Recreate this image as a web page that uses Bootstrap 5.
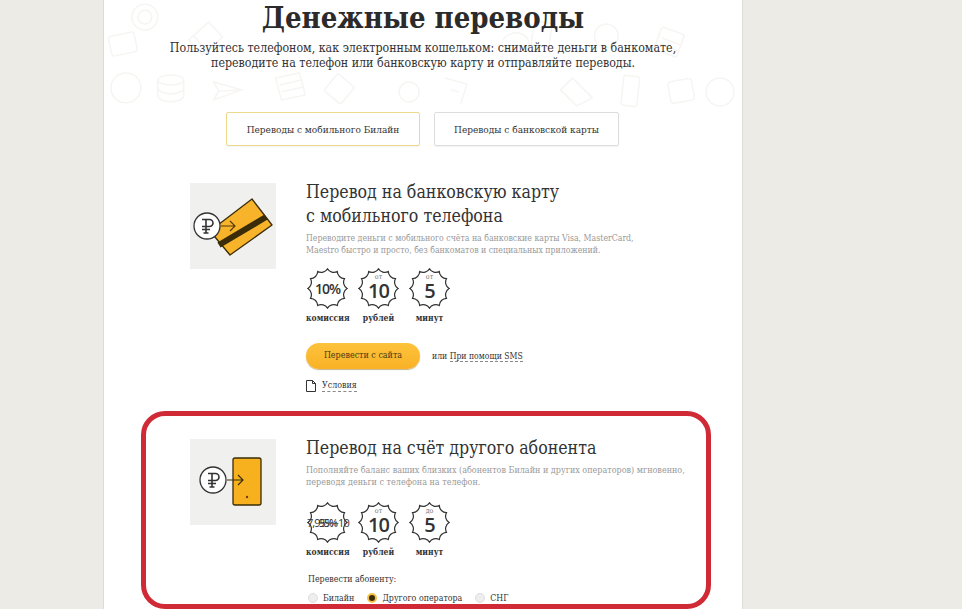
<!DOCTYPE html>
<html lang="ru">

<head>
  <meta charset="UTF-8" />
  <meta name="viewport" content="width=device-width, initial-scale=1.0" />
  <title>Денежные переводы</title>
  <link href="https://cdn.jsdelivr.net/npm/bootstrap@5.3.3/dist/css/bootstrap.min.css" rel="stylesheet" />
  <style>
    html, body {
      height: 100%;
      overflow: hidden;
    }

    body {
      background-color: #ecebe6;
      font-family: "DejaVu Serif Condensed", "DejaVu Serif", "Liberation Serif", serif;
      color: #333;
    }

    .page-col {
      width: 640px;
      margin-left: 103px;
      min-height: 700px;
      background: #fff;
      border-left: 1px solid #dddcd7;
      border-right: 1px solid #dddcd7;
    }

    .hero-area {
      height: 112px;
    }

    .hero-doodles {
      top: 0;
      left: 0;
      width: 100%;
      height: 110px;
      fill: none;
      stroke: #f6f5f2;
      stroke-width: 1.5;
    }

    .hero-title {
      font-size: 29px;
      line-height: 36px;
      font-weight: 700;
      color: #2b2b2b;
      margin: 0;
    }

    .hero-sub {
      font-size: 12.3px;
      line-height: 15px;
      margin: 5px 0 0;
    }

    .tab-btn {
      height: 34px;
      font-size: 10px;
      padding: 0;
      border: 1px solid #ddd;
      border-radius: 2px;
      color: #333;
      box-shadow: 0 1px 1px rgba(0, 0, 0, .05);
    }

    .tab-one {
      width: 194px;
      border-color: #ecd98a;
    }

    .tab-two {
      width: 185px;
    }

    .tab-row {
      gap: 14px;
      padding-left: 122px;
    }

    .offer-row {
      padding-left: 86px;
      gap: 30px;
    }

    .offer-one {
      margin-top: 37px;
    }

    .offer-two {
      margin-top: 47px;
    }

    .offer-pic {
      width: 86px;
      height: 86px;
      flex: none;
      display: block;
    }

    .offer-title {
      font-size: 17.6px;
      line-height: 24px;
      font-weight: 400;
      margin: -3px 0 0;
      color: #333;
    }

    .offer-desc {
      font-size: 8.7px;
      line-height: 12px;
      color: #999;
      margin: 4px 0 0;
    }

    .offer-two .offer-desc {
      font-size: 8.95px;
    }

    .stat-row {
      gap: 8px;
      margin-top: 12px;
    }

    .offer-two .stat-row {
      margin-top: 14px;
    }

    .stat-cell {
      width: 43px;
      text-align: center;
    }

    .stat-seal {
      width: 41px;
      height: 41px;
      margin: 0 auto;
      display: grid;
      place-items: center;
    }

    .stat-shape {
      inset: 0;
      width: 100%;
      height: 100%;
      fill: #fff;
      stroke: #333;
      stroke-width: 1.3;
    }

    .stat-num {
      font-family: "Open Sans", "Noto Sans", sans-serif;
      font-size: 20px;
      font-weight: 600;
      line-height: 20px;
      letter-spacing: -1px;
      margin-top: 5px;
      color: #333;
    }

    .stat-pct {
      font-size: 14px;
      margin-top: 0;
    }

    .stat-mix {
      font-size: 11px;
      font-weight: 400;
      margin-top: 0;
      grid-area: 1 / 1;
      white-space: nowrap;
    }

    .stat-over {
      grid-area: 1 / 1;
      font-family: "Open Sans", "Noto Sans", sans-serif;
      font-size: 11px;
      line-height: 20px;
      letter-spacing: -1px;
      white-space: nowrap;
    }

    .stat-from {
      top: 5px;
      left: 0;
      right: 0;
      font-size: 7px;
      line-height: 8px;
      color: #777;
    }

    .stat-label {
      font-size: 8.5px;
      line-height: 12px;
      font-weight: 700;
      margin-top: 3px;
      white-space: nowrap;
    }

    .action-row {
      margin-top: 19px;
      gap: 12px;
      font-size: 8.6px;
    }

    .send-btn {
      width: 114px;
      height: 26px;
      padding: 0;
      border: 0;
      border-radius: 13px;
      font-size: 8.9px;
      color: #4a3a10;
      background: linear-gradient(#fdc33c, #f9b125);
      box-shadow: 0 1px 1px rgba(130, 90, 0, .45);
    }

    .dash-link {
      color: #333;
      text-decoration: none;
      border-bottom: 1px dashed #888;
    }

    .terms-row {
      margin-top: 10px;
      gap: 6px;
      font-size: 8.8px;
      line-height: 12px;
    }

    .pick-label {
      font-size: 8.8px;
      line-height: 12px;
      margin: 15px 0 0 2px;
    }

    .pick-row {
      gap: 13px;
      margin: 7px 0 0 2px;
      font-size: 8.8px;
      line-height: 12px;
    }

    .pick-row .form-check {
      min-height: 0;
      margin: 0;
      padding-left: 15px;
    }

    .pick-row .form-check-input {
      width: 10px;
      height: 10px;
      margin: 1px 0 0 -15px;
      border-color: #ddd;
      background-color: #eee;
    }

    .pick-row .form-check-input:checked {
      background-color: #3a2c08;
      border: 2.5px solid #f5c044;
      background-image: none;
    }

    .mark-frame {
      left: -165px;
      top: -28px;
      width: 570px;
      height: 198px;
      border: 5px solid #cf2a36;
      border-radius: 24px;
      pointer-events: none;
    }
  </style>
</head>

<body>
  <svg width="0" height="0" class="d-block">
    <symbol id="seal" viewBox="0 0 44 44">
      <path d="M43 22A8 8 0 0 0 40.2 32.5A8 8 0 0 0 32.5 40.2A8 8 0 0 0 22 43A8 8 0 0 0 11.5 40.2A8 8 0 0 0 3.8 32.5A8 8 0 0 0 1 22A8 8 0 0 0 3.8 11.5A8 8 0 0 0 11.5 3.8A8 8 0 0 0 22 1A8 8 0 0 0 32.5 3.8A8 8 0 0 0 40.2 11.5A8 8 0 0 0 43 22Z" />
    </symbol>
    <symbol id="rub" viewBox="0 0 28 28">
      <circle cx="14" cy="14" r="13" fill="#fff" stroke="#333" stroke-width="1.3" />
      <path d="M13 21V7.5H16.5a3.5 3.5 0 0 1 0 7H9M9 17.5H17M9 7.5H13M10.5 21H15.5" fill="none" stroke="#333" stroke-width="1.6" />
    </symbol>
  </svg>

  <div class="page-col">
    <div class="hero-area position-relative text-center">
      <svg class="hero-doodles position-absolute" viewBox="0 0 640 110">
        <circle cx="41" cy="17" r="13" />
        <circle cx="41" cy="17" r="7" />
        <rect x="6" y="34" width="26" height="20" rx="3" transform="rotate(-12 19 44)" />
        <path d="M85 40l20-18 14 15-20 18zM90 36l14 15" />
        <circle cx="22" cy="88" r="15" />
        <ellipse cx="67" cy="80" rx="13" ry="5" />
        <path d="M54 80v16c0 3 6 6 13 6s13-3 13-6V80M54 88c0 3 6 6 13 6s13-3 13-6" />
        <path d="M110 82l28 8-28 10 5-9zM115 91l23-1" />
        <path d="M172 78l24-5 6 22-24 5zM176 85l22-5M178 92l22-5" />
        <rect x="225" y="78" width="22" height="22" rx="2" transform="rotate(40 236 89)" />
        <circle cx="306" cy="92" r="10" />
        <path d="M342 78l22 6-6 20M348 90l8 2" />
        <path d="M400 40c10-14 30-6 26 8" />
        <rect x="430" y="22" width="18" height="24" rx="2" transform="rotate(8 439 34)" />
        <path d="M470 78l20 20-16 8-16-16z" />
        <rect x="520" y="76" width="16" height="30" rx="2" transform="rotate(6 528 91)" />
        <rect x="567" y="80" width="24" height="22" rx="3" transform="rotate(-10 579 91)" />
        <rect x="555" y="30" width="24" height="24" rx="2" transform="rotate(20 567 42)" />
        <path d="M560 38l18 7M558 44l18 7" />
        <circle cx="504" cy="36" r="12" />
        <circle cx="618" cy="92" r="14" />
      </svg>
      <div class="position-relative">
        <h1 class="hero-title">Денежные переводы</h1>
        <p class="hero-sub">Пользуйтесь телефоном, как электронным кошельком: снимайте деньги в банкомате,<br />переводите на телефон или банковскую карту и отправляйте переводы.</p>
      </div>
    </div>

    <div class="tab-row d-flex">
      <button type="button" class="btn tab-btn tab-one">Переводы с мобильного Билайн</button>
      <button type="button" class="btn tab-btn tab-two">Переводы с банковской карты</button>
    </div>

    <div class="offer-row offer-one d-flex">
      <svg class="offer-pic" viewBox="0 0 86 86">
        <rect width="86" height="86" fill="#f0f0ef" />
        <path d="M62 16l20 26-42 30-20-24z" fill="#f7b42a" stroke="#3a2c08" stroke-width="1.3" stroke-linejoin="round" />
        <path d="M29 62L76 34" stroke="#3a2c08" stroke-width="6" />
        <use href="#rub" x="3" y="29" width="28" height="28" />
        <path d="M31 43H45M40 38l5 5-5 5" fill="none" stroke="#5a3a0a" stroke-width="1.2" />
      </svg>
      <div>
        <h2 class="offer-title">Перевод на банковскую карту<br />с мобильного телефона</h2>
        <p class="offer-desc">Переводите деньги с мобильного счёта на банковские карты Visa, MasterCard,<br />Maestro быстро и просто, без банкоматов и специальных приложений.</p>
        <div class="stat-row d-flex">
          <div class="stat-cell">
            <div class="stat-seal position-relative">
              <svg class="stat-shape position-absolute"><use href="#seal" /></svg>
              <div class="stat-num stat-pct position-relative">10%</div>
            </div>
            <div class="stat-label">комиссия</div>
          </div>
          <div class="stat-cell">
            <div class="stat-seal position-relative">
              <svg class="stat-shape position-absolute"><use href="#seal" /></svg>
              <span class="stat-from position-absolute">от</span>
              <div class="stat-num position-relative">10</div>
            </div>
            <div class="stat-label">рублей</div>
          </div>
          <div class="stat-cell">
            <div class="stat-seal position-relative">
              <svg class="stat-shape position-absolute"><use href="#seal" /></svg>
              <span class="stat-from position-absolute">от</span>
              <div class="stat-num position-relative">5</div>
            </div>
            <div class="stat-label">минут</div>
          </div>
        </div>
        <div class="action-row d-flex align-items-center">
          <button type="button" class="btn send-btn">Перевести с сайта</button>
          <span>или <a href="#" class="dash-link">При помощи SMS</a></span>
        </div>
        <div class="terms-row d-flex align-items-center">
          <svg width="10" height="12" viewBox="0 0 10 12">
            <path d="M.5.5H6.5L9.5 3.5V11.5H.5zM6.5.5V3.5H9.5" fill="#fff" stroke="#333" />
          </svg>
          <a href="#" class="dash-link">Условия</a>
        </div>
      </div>
    </div>

    <div class="offer-row offer-two d-flex">
      <svg class="offer-pic" viewBox="0 0 86 86">
        <rect width="86" height="86" fill="#f0f0ef" />
        <rect x="43" y="19" width="28" height="47" rx="2" fill="#f7b11f" stroke="#3a2c08" stroke-width="1.3" />
        <circle cx="57" cy="58" r="1.2" fill="#7a3a0a" />
        <use href="#rub" x="9" y="27" width="28" height="28" />
        <path d="M37 41H53M48 36l5 5-5 5" fill="none" stroke="#3a2c08" stroke-width="1.2" />
      </svg>
      <div class="position-relative flex-grow-1">
        <h2 class="offer-title">Перевод на счёт другого абонента</h2>
        <p class="offer-desc">Пополняйте баланс ваших близких (абонентов Билайн и других операторов) мгновенно,<br />переводя деньги с телефона на телефон.</p>
        <div class="stat-row d-flex">
          <div class="stat-cell">
            <div class="stat-seal position-relative">
              <svg class="stat-shape position-absolute"><use href="#seal" /></svg>
              <div class="stat-num stat-mix position-relative">7,95%+10</div>
              <span class="stat-over position-relative">95%</span>
            </div>
            <div class="stat-label">комиссия</div>
          </div>
          <div class="stat-cell">
            <div class="stat-seal position-relative">
              <svg class="stat-shape position-absolute"><use href="#seal" /></svg>
              <span class="stat-from position-absolute">от</span>
              <div class="stat-num position-relative">10</div>
            </div>
            <div class="stat-label">рублей</div>
          </div>
          <div class="stat-cell">
            <div class="stat-seal position-relative">
              <svg class="stat-shape position-absolute"><use href="#seal" /></svg>
              <span class="stat-from position-absolute">до</span>
              <div class="stat-num position-relative">5</div>
            </div>
            <div class="stat-label">минут</div>
          </div>
        </div>
        <div class="pick-label">Перевести абоненту:</div>
        <div class="pick-row d-flex">
          <div class="form-check">
            <input class="form-check-input" type="radio" name="target" id="pickOne" />
            <label class="form-check-label" for="pickOne">Билайн</label>
          </div>
          <div class="form-check">
            <input class="form-check-input" type="radio" name="target" id="pickTwo" checked />
            <label class="form-check-label" for="pickTwo">Другого оператора</label>
          </div>
          <div class="form-check">
            <input class="form-check-input" type="radio" name="target" id="pickThree" />
            <label class="form-check-label" for="pickThree">СНГ</label>
          </div>
        </div>
        <div class="mark-frame position-absolute"></div>
      </div>
    </div>
  </div>

  <script src="https://cdn.jsdelivr.net/npm/bootstrap@5.3.3/dist/js/bootstrap.bundle.min.js"></script>
</body>

</html>
